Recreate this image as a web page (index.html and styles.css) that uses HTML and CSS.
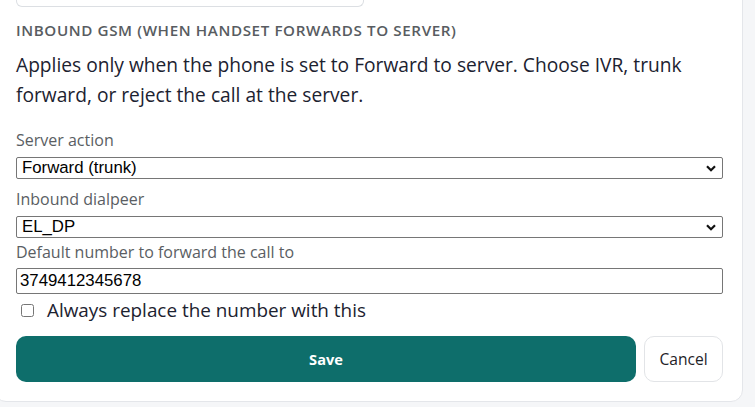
FILE: index.html
```html
<!DOCTYPE html>
<html lang="en">
  <head>
    <meta charset="UTF-8" />
    <meta name="viewport" content="width=device-width, initial-scale=1.0" />
    <title>Phone settings</title>
    <link rel="stylesheet" href="styles.css">
  </head>
  <body>
    <div class="page">
      <div class="card">
        <div class="prev-field"></div>

        <h3 class="group-title">Inbound GSM (when handset forwards to server)</h3>
        <p class="group-note">
          Applies only when the phone is set to Forward to server. Choose IVR, trunk
          forward, or reject the call at the server.
        </p>

        <label class="field-label" for="server-action">Server action</label>
        <div class="select-wrap">
          <select id="server-action" class="field">
            <option>Forward (trunk)</option>
            <option>IVR</option>
            <option>Reject</option>
          </select>
          <svg class="chevron" viewBox="0 0 10 7" width="10" height="7">
            <path d="M1 1.2l4 4 4-4" fill="none" stroke="#111" stroke-width="2.2" />
          </svg>
        </div>

        <label class="field-label" for="dialpeer">Inbound dialpeer</label>
        <div class="select-wrap">
          <select id="dialpeer" class="field">
            <option>EL_DP</option>
          </select>
          <svg class="chevron" viewBox="0 0 10 7" width="10" height="7">
            <path d="M1 1.2l4 4 4-4" fill="none" stroke="#111" stroke-width="2.2" />
          </svg>
        </div>

        <label class="field-label tight" for="fwd-number">Default number to forward the call to</label>
        <input id="fwd-number" class="field field-input" type="text" value="3749412345678" />

        <label class="check-row">
          <input type="checkbox" />
          <span>Always replace the number with this</span>
        </label>

        <div class="actions">
          <button class="btn btn-save" type="button">Save</button>
          <button class="btn btn-cancel" type="button">Cancel</button>
        </div>
      </div>
    </div>
  </body>
</html>
```

FILE: styles.css
```css
html,
body {
  margin: 0;
  background: #f5f6f8;
  font-family: "Open Sans", "Noto Sans", sans-serif;
  color: #1f2328;
}

.page {
  height: 407px;
  overflow: hidden;
}

.card {
  margin: -40px 12px 0 -6px;
  padding: 0 19px 19px 21px;
  background: #fff;
  border: 1px solid #e4e6ea;
  border-radius: 12px;
}

/* bottom of the field above, scrolled mostly out of view */
.prev-field {
  width: 346px;
  height: 45px;
  border: 1px solid #dcdfe3;
  border-top: 0;
  border-radius: 0 0 6px 6px;
}

.group-title {
  margin: 13px 0 0;
  font-size: 15.2px;
  line-height: 20px;
  font-weight: 600;
  letter-spacing: 0.6px;
  text-transform: uppercase;
  color: #585c61;
}

.group-note {
  margin: 10px 0 0;
  font-size: 19.2px;
  line-height: 30px;
  color: #1c2230;
}

.field-label {
  display: block;
  margin: 10px 0 7px;
  font-size: 16px;
  line-height: 20px;
  color: #5a5e63;
}

.group-note + .field-label {
  margin-top: 20px;
}

.field-label.tight {
  margin: 4px 0 6px;
}

.select-wrap {
  position: relative;
}

.field {
  display: block;
  box-sizing: border-box;
  width: 100%;
  margin: 0;
  font-family: "Liberation Sans", Arial, sans-serif;
  font-size: 16.8px;
  color: #000;
  background: #fff;
  border: 1px solid #767676;
  border-radius: 2px;
  outline: none;
}

select.field {
  height: 22px;
  padding: 0 5px;
  line-height: 20px;
  appearance: none;
  -webkit-appearance: none;
}

.chevron {
  position: absolute;
  right: 7px;
  top: 8px;
  pointer-events: none;
}

.field-input {
  height: 26px;
  padding: 0 3px;
}

.check-row {
  display: flex;
  align-items: center;
  gap: 13px;
  margin: 4px 0 0 4px;
  height: 24px;
  font-size: 18.9px;
  color: #1c2230;
}

.check-row input {
  width: 13px;
  height: 13px;
  margin: 0 0 0 1px;
}

.actions {
  display: flex;
  gap: 8px;
  margin-top: 14px;
}

.btn {
  height: 46px;
  border-radius: 10px;
  font-family: "Open Sans", "Noto Sans", sans-serif;
  cursor: pointer;
}

.btn-save {
  flex: 1;
  background: #0e6e6b;
  border: 0;
  color: #fff;
  font-size: 14.6px;
  font-weight: 700;
}

.btn-cancel {
  width: 79px;
  background: #fff;
  border: 1px solid #e2e4e7;
  color: #1f2328;
  font-size: 15.6px;
}
```
